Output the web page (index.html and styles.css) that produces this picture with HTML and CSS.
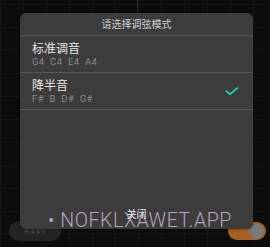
FILE: index.html
```html
<!DOCTYPE html>
<html>
<head>
<meta charset="utf-8">
<link rel="stylesheet" href="styles.css">
</head>
<body>
<div class="app">
  <div class="vline"></div>
  <div class="bottom-row">
    <div class="pill"><span>A 4 4 0</span></div>
    <div class="toggle"><div class="knob"></div></div>
  </div>
</div>
<div class="dialog">
  <div class="title">请选择调弦模式</div>
  <div class="item">
    <div class="item-text">
      <div class="name">标准调音</div>
      <div class="notes">G4&nbsp;&nbsp;C4&nbsp;&nbsp;E4&nbsp;&nbsp;A4</div>
    </div>
  </div>
  <div class="item">
    <div class="item-text">
      <div class="name">降半音</div>
      <div class="notes">F#&nbsp;&nbsp;B&nbsp;&nbsp;D#&nbsp;&nbsp;G#</div>
    </div>
    <svg class="check" width="14" height="10" viewBox="0 0 14 10"><path d="M1.5 5.2 L5 8.2 L12.5 2" fill="none" stroke="#22c9a8" stroke-width="2" stroke-linecap="round" stroke-linejoin="round"/></svg>
  </div>
  <div class="spacer"></div>
  <div class="close">关闭</div>
</div>
<div class="watermark">• NOFKLXAWET.APP</div>
</body>
</html>
```
FILE: styles.css
```css
html, body {
  margin: 0;
  padding: 0;
}
body {
  width: 270px;
  height: 247px;
  overflow: hidden;
  position: relative;
  background: #0c0c0c;
  font-family: "Noto Sans CJK SC", "Noto Sans", sans-serif;
}
.app {
  height: 247px;
  display: flex;
  flex-direction: column;
  justify-content: flex-end;
  background-image:
    linear-gradient(to right, rgba(255,255,255,0.03) 1px, transparent 1px),
    linear-gradient(to bottom, rgba(255,255,255,0.03) 1px, transparent 1px);
  background-size: 23px 23px;
  background-position: 0 4px;
  position: relative;
}
.vline {
  position: absolute;
  left: 137px;
  top: 0;
  width: 1px;
  height: 20px;
  background: #2a2a2a;
}
.bottom-row {
  display: flex;
  justify-content: space-between;
  align-items: center;
  padding: 0 4px 6px 9px;
}
.pill {
  width: 52px;
  height: 20px;
  border-radius: 10px;
  background: #242424;
  display: flex;
  align-items: center;
  justify-content: center;
  font-size: 7px;
  color: #555;
}
.toggle {
  width: 38px;
  height: 18px;
  border-radius: 9px;
  background: #a8601e;
  display: flex;
  justify-content: flex-end;
  align-items: center;
  padding: 0 2px;
  box-sizing: border-box;
}
.knob {
  width: 15px;
  height: 15px;
  border-radius: 50%;
  background: #7a7a7a;
}
.dialog {
  position: absolute;
  left: 20px;
  top: 13px;
  width: 233px;
  height: 216px;
  background: #3c3c3c;
  border-radius: 6px;
  display: flex;
  flex-direction: column;
  box-shadow: 0 0 3px rgba(0,0,0,0.5);
}
.title {
  height: 22px;
  line-height: 22px;
  text-align: center;
  font-size: 10px;
  color: #cfcfcf;
  border-bottom: 1px solid #575757;
}
.item {
  height: 36px;
  border-bottom: 1px solid #575757;
  display: flex;
  align-items: center;
  justify-content: space-between;
  padding: 0 14px 0 12px;
}
.item-text {
  display: flex;
  flex-direction: column;
  gap: 1px;
}
.name {
  font-size: 12px;
  line-height: 14px;
  color: #e6e6e6;
  padding-top: 1px;
}
.notes {
  font-family: Roboto, "Noto Sans", sans-serif;
  font-size: 9.5px;
  line-height: 12px;
  letter-spacing: 0.4px;
  color: #8a8a8a;
}
.check {
  display: block;
}
.spacer {
  flex: 1;
}
.close {
  height: 24px;
  line-height: 17px;
  text-align: center;
  font-size: 10px;
  color: #f0f0f0;
}
.watermark {
  position: absolute;
  left: 48px;
  top: 210px;
  font-family: Roboto, "Noto Sans", sans-serif;
  font-weight: 300;
  font-size: 19.5px;
  line-height: 22px;
  letter-spacing: 0.6px;
  color: rgba(205, 185, 215, 0.85);
  white-space: nowrap;
}
```
